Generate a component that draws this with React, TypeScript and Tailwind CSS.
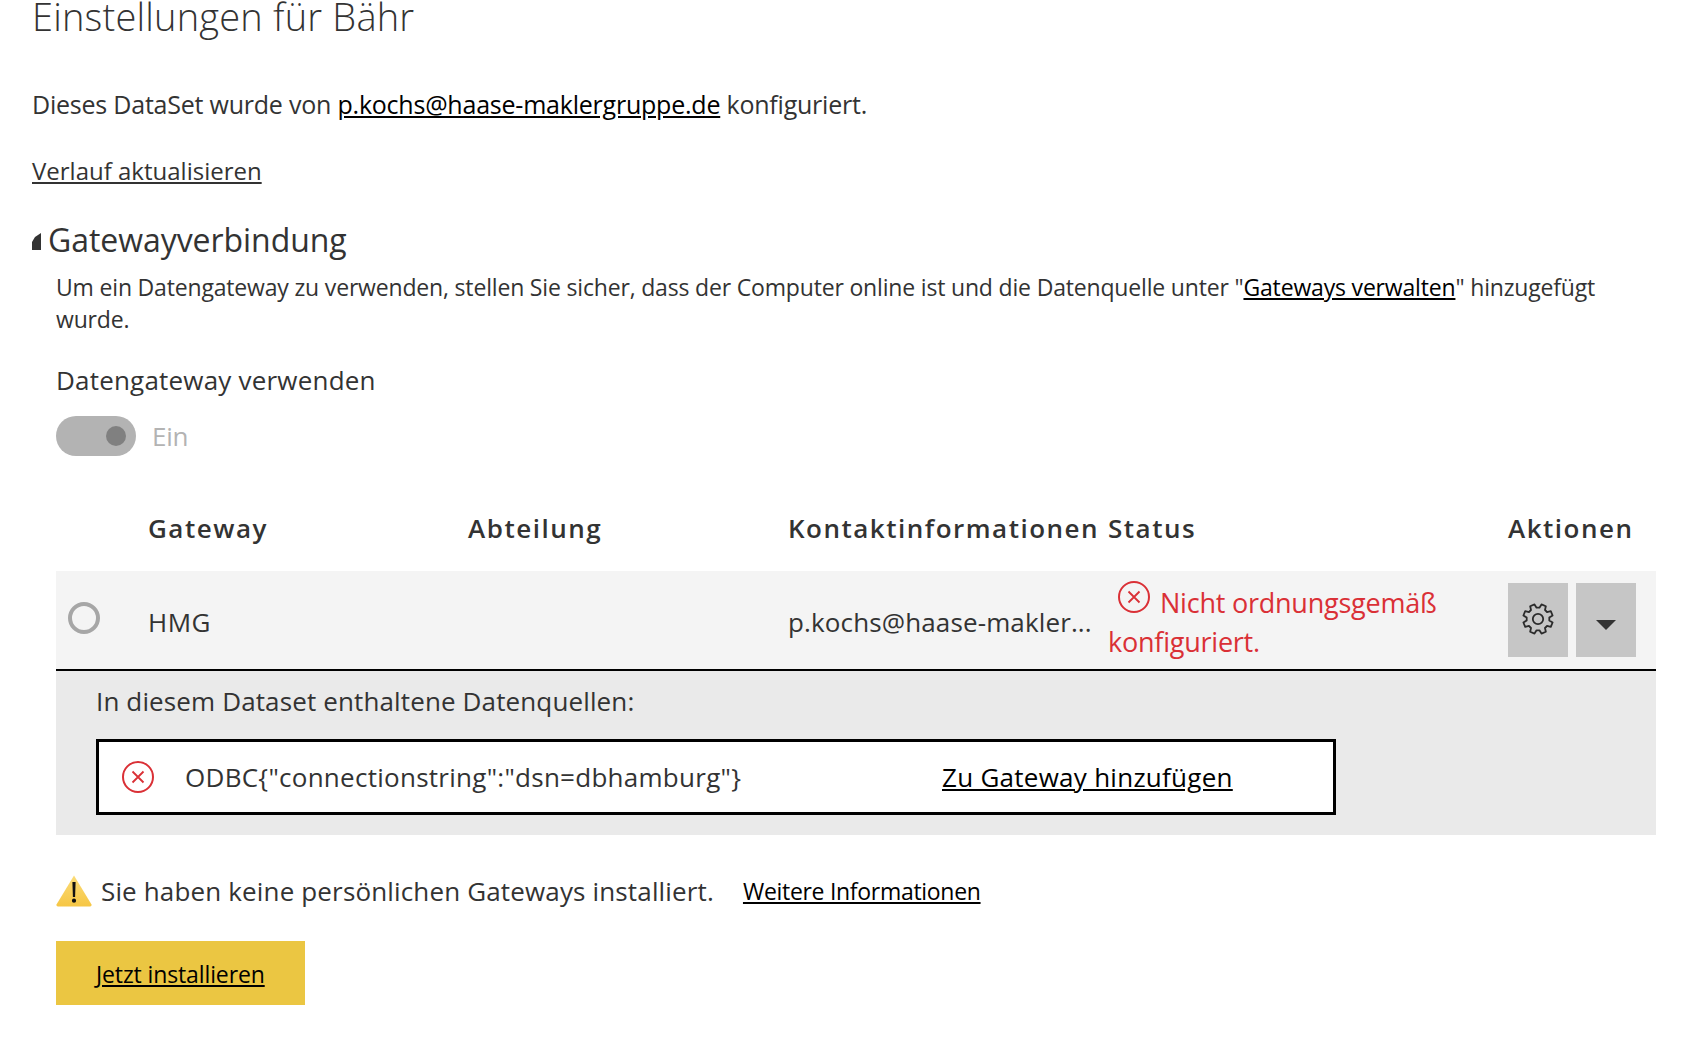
import * as React from 'react'

const font = "font-['Open_Sans','Noto_Sans',sans-serif]"

// 8 tooth cog outline, easier to compute than to write out by hand
const gearPath = (() => {
  const cx = 16
  const cy = 16
  const pts: string[] = []
  const step = Math.PI / 4
  for (let i = 0; i < 8; i++) {
    const a = i * step - Math.PI / 2 + step / 2
    const seq: [number, number][] = [
      [11.4, a - step * 0.34],
      [15, a - step * 0.2],
      [15, a + step * 0.2],
      [11.4, a + step * 0.34],
    ]
    for (const [r, t] of seq) {
      pts.push(`${(cx + r * Math.cos(t)).toFixed(2)} ${(cy + r * Math.sin(t)).toFixed(2)}`)
    }
  }
  return `M${pts.join('L')}Z`
})()

function ErrorIcon({ className }: { className?: string }) {
  return (
    <svg viewBox="0 0 32 32" className={className} fill="none" stroke="#da3036" strokeWidth="2">
      <circle cx="16" cy="16" r="15" />
      <path d="M10.5 10.5 21.5 21.5M21.5 10.5 10.5 21.5" strokeWidth="1.8" />
    </svg>
  )
}

function WarningIcon() {
  return (
    <svg viewBox="0 0 36 32" className="w-[36px] h-[32px] shrink-0">
      <defs>
        <linearGradient id="warn" x1="0" y1="0" x2="0" y2="1">
          <stop offset="0" stopColor="#fbdc78" />
          <stop offset="1" stopColor="#f6c644" />
        </linearGradient>
      </defs>
      <path d="M18 .5 35.5 29.5Q36 31.5 34 31.5H2Q0 31.5.5 29.5Z" fill="url(#warn)" />
      <path d="M16.4 7h3.2l-.5 15h-2.2Z M18 23.6a2.1 2.1 0 1 1 0 4.2 2.1 2.1 0 0 1 0-4.2Z" fill="#111" />
    </svg>
  )
}

export default function App() {
  return (
    <div className={`${font} w-[1686px] h-[1064px] overflow-hidden bg-white text-[#333] pl-[32px]`}>
      <h1 className="h-[46px] -mt-[10px] font-light text-[38px] leading-[52px] tracking-[0.2px] text-[#333]">Einstellungen für Bähr</h1>

      <p className="mt-[52px] text-[25px] leading-[32px] tracking-[-0.22px]">
        Dieses DataSet wurde von <a className="underline text-black">p.kochs@haase-maklergruppe.de</a> konfiguriert.
      </p>
      <p className="mt-[37px] text-[24px] leading-[28px]">
        <a className="underline">Verlauf aktualisieren</a>
      </p>

      <div className="mt-[34px] flex items-center h-[42px]">
        <svg viewBox="0 0 9 17" className="w-[9px] h-[17px] mr-[7px] mt-[3px] shrink-0" fill="#333">
          <path d="M0 17h9V0L3 4 0 9Z" />
        </svg>
        <h2 className="text-[32px] leading-[42px] tracking-[-0.05px]">Gatewayverbindung</h2>
      </div>

      <div className="pl-[24px] w-[1624px]">
        <p className="mt-[10px] w-[1600px] text-[23px] leading-[32px] tracking-[-0.175px]">
          Um ein Datengateway zu verwenden, stellen Sie sicher, dass der Computer online ist und die Datenquelle unter "<a className="underline text-black">Gateways verwalten</a>" hinzugefügt wurde.
        </p>

        <p className="mt-[27px] text-[26px] leading-[36px] tracking-[0.2px]">Datengateway verwenden</p>

        <div className="mt-[18px] flex items-center h-[40px]">
          <div className="w-[80px] h-[40px] rounded-full bg-[#b3b3b3] flex items-center justify-end pr-[10px]">
            <span className="w-[20px] h-[20px] rounded-full bg-[#808080]" />
          </div>
          <span className="ml-[16px] text-[26px] tracking-[-0.3px] text-[#b3b3b3]">Ein</span>
        </div>

        <div className="mt-[50px] grid grid-cols-[92px_320px_320px_320px_400px_148px] w-[1600px] h-[43px] items-center text-[26px] leading-[36px] font-semibold tracking-[1.5px] text-[#333] whitespace-nowrap">
          <span />
          <span>Gateway</span>
          <span>Abteilung</span>
          <span>Kontaktinformationen</span>
          <span>Status</span>
          <span>Aktionen</span>
        </div>

        <div className="grid grid-cols-[92px_320px_320px_320px_400px_148px] w-[1600px] h-[100px] mt-[22px] bg-[#f4f4f4] border-b-2 border-black items-center">
          <span className="ml-[12px] w-[32px] h-[32px] rounded-full border-[4px] border-[#a6a6a6] -mt-[5px]" />
          <span className="text-[26px] tracking-[0.5px] mt-[4px]">HMG</span>
          <span />
          <span className="text-[26px] tracking-[0.13px] whitespace-nowrap mt-[4px]">p.kochs@haase-makler...</span>
          <div className="text-[27px] leading-[39px] tracking-[-0.23px] text-[#da3036] mt-[4px]">
            <ErrorIcon className="inline-block align-middle w-[32px] h-[32px] ml-[10px] mr-[10px] -translate-y-[9px]" />
            Nicht ordnungsgemäß
            <br />
            konfiguriert.
          </div>
          <div className="flex gap-[8px]">
            <button className="w-[60px] h-[74px] bg-[#c6c6c6] flex items-center justify-center">
              <svg viewBox="0 0 32 32" className="w-[32px] h-[32px] -mt-[2px]" fill="none" stroke="#2b2b2b" strokeWidth="1.8" strokeLinejoin="round">
                <path d={gearPath} />
                <circle cx="16" cy="16" r="5.2" />
              </svg>
            </button>
            <button className="w-[60px] h-[74px] bg-[#c6c6c6] flex items-center justify-center">
              <svg viewBox="0 0 20 10" className="w-[20px] h-[10px] mt-[10px]" fill="#333">
                <path d="M0 0h20L10 10Z" />
              </svg>
            </button>
          </div>
        </div>

        <div className="w-[1600px] h-[164px] bg-[#eaeaea] pl-[40px] pt-[12px]">
          <p className="text-[26px] leading-[36px] tracking-[0.13px]">In diesem Dataset enthaltene Datenquellen:</p>
          <div className="mt-[20px] w-[1240px] h-[76px] border-[3px] border-black bg-white flex items-center text-[26px] tracking-[0.27px] pl-[23px]">
            <ErrorIcon className="w-[32px] h-[32px] shrink-0" />
            <span className="ml-[31px] w-[757px]">ODBC{'{'}"connectionstring":"dsn=dbhamburg"{'}'}</span>
            <a className="underline text-black">Zu Gateway hinzufügen</a>
          </div>
        </div>

        <div className="mt-[40px] flex items-center h-[32px]">
          <WarningIcon />
          <span className="ml-[9px] text-[26px] tracking-[0.15px]">Sie haben keine persönlichen Gateways installiert.</span>
          <a className="ml-[29px] mt-[1px] text-[23px] tracking-[-0.3px] underline text-black">Weitere Informationen</a>
        </div>

        <button className="mt-[34px] w-[249px] h-[64px] bg-[#ebc642] pl-[40px] pt-[2px] text-left text-[23px] tracking-[-0.12px] text-black">
          <span className="underline">Jetzt installieren</span>
        </button>
      </div>
    </div>
  )
}
